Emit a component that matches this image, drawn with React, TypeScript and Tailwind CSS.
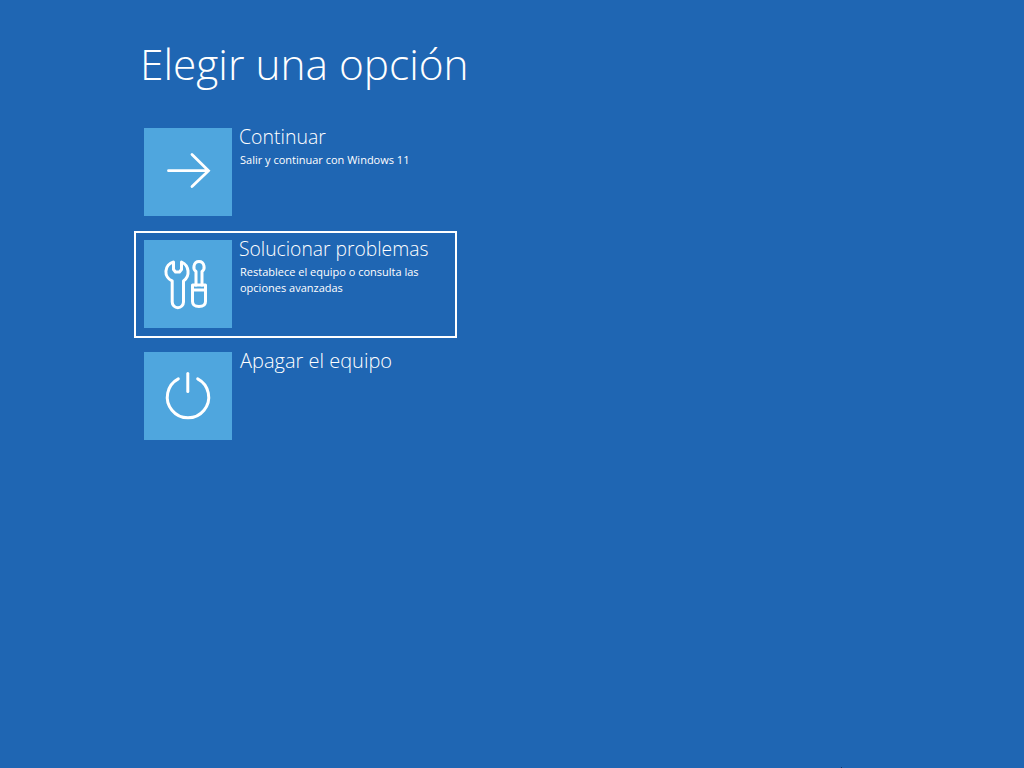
import React from "react";

const F = { fontFamily: '"Open Sans", sans-serif' };

function Row({ icon, title, lines, selected, titleClass }: { icon: React.ReactNode; title: string; lines?: string[]; selected?: boolean; titleClass?: string }) {
  return (
    <div className={`w-[323px] h-[107px] border-2 flex pl-[8px] pt-[7px] ${selected ? "border-white" : "border-transparent"}`}>
      <div className="w-[88px] h-[88px] bg-[#4fa6de] flex items-center justify-center shrink-0">{icon}</div>
      <div className="text-white ml-[7px]">
        <div className={`leading-[26px] font-light -mt-[4px] whitespace-nowrap ${titleClass ?? "text-[19.5px]"}`}>{title}</div>
        {lines && (
          <div className="text-[11px] leading-[16px] ml-[1px] mt-[2px] whitespace-nowrap">
            {lines.map((l) => (
              <div key={l}>{l}</div>
            ))}
          </div>
        )}
      </div>
    </div>
  );
}

export default function App() {
  return (
    <div className="relative w-[1024px] h-[768px] overflow-hidden bg-[#1f66b3]" style={F}>
      <div className="pt-[35px] pl-[134px]">
        <h1 className="text-white text-[42.4px] leading-[58px] font-light ml-[6px] whitespace-nowrap">Elegir una opción</h1>
        <div className="flex flex-col gap-[5px] mt-[26px]">
          <Row
            title="Continuar"
            lines={["Salir y continuar con Windows 11"]}
            icon={
              <svg width="88" height="88" viewBox="0 0 88 88" fill="none" stroke="white" strokeWidth="2.8" strokeLinecap="round">
                <path d="M24.500 42.700H64M48 26.500L64.500 42.700L48 58.500" />
              </svg>
            }
          />
          <Row
            selected
            title="Solucionar problemas"
            titleClass="text-[19.3px]"
            lines={["Restablece el equipo o consulta las", "opciones avanzadas"]}
            icon={
              <svg width="88" height="88" viewBox="0 0 88 88" fill="none" stroke="white" strokeWidth="3" strokeLinejoin="round" strokeLinecap="round">
                <path d="M29.500 22A10 10 0 0 0 28.200 41V62A5.650 5.650 0 0 0 39.500 62V41A11 11 0 0 0 37.500 22V29.500L35.500 32H31.500L29.500 29.500Z" />
                <path d="M52 45V31.500C50 30 49.500 28.500 50 26C50.500 23.500 52.500 21.500 55 21.500C57.500 21.500 59.500 23.500 60 26C60.500 28.500 60 30 58 31.500V45" />
                <path d="M48.500 45H61.500V61.500C61.500 65 58.500 66.500 55 66.500C51.500 66.500 48.500 65 48.500 61.500Z" />
                <path d="M48.500 50H61.500" />
              </svg>
            }
          />
          <Row
            title="Apagar el equipo"
            titleClass="text-[20px] ml-[1px]"
            icon={
              <svg width="88" height="88" viewBox="0 0 88 88" fill="none" stroke="white" strokeWidth="3" strokeLinecap="round">
                <path d="M43.800 21.500V39.500" />
                <path d="M34.300 26.800A20.700 20.700 0 1 0 53.700 26.800" />
              </svg>
            }
          />
        </div>
      </div>
      <div className="absolute left-[841px] top-[767px] w-[1px] h-[1px] bg-[#10306a]" />
    </div>
  );
}
